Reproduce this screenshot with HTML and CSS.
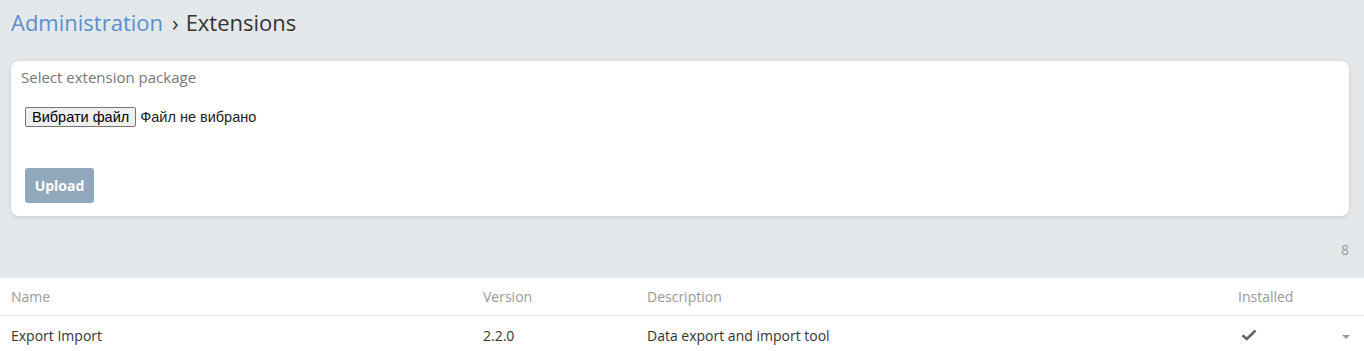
FILE: index.html
```html
<!DOCTYPE html>
<html>
<head>
<meta charset="utf-8">
<link rel="stylesheet" href="styles.css">
</head>
<body>
<div class="page">
  <h1 class="crumbs"><span class="crumb-link">Administration</span><span class="sep">›</span><span class="crumb-cur">Extensions</span></h1>
  <div class="card">
    <div class="card-label">Select extension package</div>
    <div class="file-row">
      <button class="file-btn" type="button">Вибрати файл</button>
      <span class="file-name">Файл не вибрано</span>
    </div>
    <button class="upload" type="button">Upload</button>
  </div>
  <div class="count">8</div>
</div>
<table class="ext-table">
  <thead>
    <tr>
      <th class="c-name">Name</th>
      <th class="c-ver">Version</th>
      <th class="c-desc">Description</th>
      <th class="c-inst">Installed</th>
      <th class="c-act"></th>
    </tr>
  </thead>
  <tbody>
    <tr>
      <td class="c-name">Export Import</td>
      <td class="c-ver">2.2.0</td>
      <td class="c-desc">Data export and import tool</td>
      <td class="c-inst"><svg class="check" width="16" height="12" viewBox="0 0 16 12"><path d="M1.5 6.2 L5.8 10 L14.5 1.5" fill="none" stroke="#666" stroke-width="2.6"/></svg></td>
      <td class="c-act"><span class="caret"></span></td>
    </tr>
  </tbody>
</table>
</body>
</html>
```
FILE: styles.css
```css
html, body {
  margin: 0;
  padding: 0;
}
body {
  background: #e4e8eb;
  font-family: "Open Sans", "Noto Sans", sans-serif;
  color: #333;
  height: 351px;
  overflow: hidden;
}
.page {
  padding: 0 15px 0 11px;
}
.crumbs {
  margin: 0;
  padding-top: 6px;
  height: 61px;
  box-sizing: border-box;
  font-size: 22px;
  font-weight: 400;
  line-height: 32px;
  color: #333;
}
.crumb-link {
  color: #5b8fcc;
}
.sep {
  color: #333;
  margin: 0 7px 0 9px;
}
.card {
  background: #fff;
  border-radius: 8px;
  box-shadow: 0 1px 4px rgba(0,0,0,0.12);
  padding: 5px 10px 14px 10px;
  height: 155px;
  box-sizing: border-box;
}
.card-label {
  font-size: 15px;
  line-height: 22px;
  color: #777;
}
.file-row {
  display: flex;
  align-items: center;
  margin-top: 19px;
  margin-left: 4px;
  height: 20px;
}
.file-btn {
  font-family: "Liberation Sans", Arial, sans-serif;
  font-size: 14.5px;
  height: 20px;
  padding: 0 6px;
  background: #efefef;
  border: 1px solid #767676;
  border-radius: 2px;
  color: #000;
  line-height: 18px;
}
.file-name {
  font-family: "Liberation Sans", Arial, sans-serif;
  font-size: 14.5px;
  color: #222;
  margin-left: 4px;
}
.upload {
  display: block;
  margin-top: 41px;
  margin-left: 4px;
  width: 69px;
  height: 35px;
  border: none;
  border-radius: 3px;
  background: #91a7bb;
  color: #fff;
  font-family: "Open Sans", sans-serif;
  font-weight: 700;
  font-size: 14px;
  padding: 0;
}
.count {
  text-align: right;
  font-size: 14px;
  color: #999;
  line-height: 20px;
  margin-top: 24px;
  height: 38px;
}
.ext-table {
  width: 100%;
  background: #fff;
  border-collapse: collapse;
  font-size: 14px;
}
.ext-table th {
  font-weight: 400;
  color: #999;
  text-align: left;
  height: 37px;
  padding: 0;
  border-bottom: 1px solid #dde0e3;
}
.ext-table td {
  height: 38px;
  padding: 0;
  color: #333;
}
.c-name { padding-left: 11px !important; width: 472px; }
.c-ver { width: 164px; }
.c-desc { width: 591px; }
.c-inst { width: 90px; }
.check {
  display: block;
  margin-left: 3px;
}
.c-act { text-align: right; padding-right: 14px !important; }
.caret {
  display: inline-block;
  width: 0;
  height: 0;
  border-left: 4px solid transparent;
  border-right: 4px solid transparent;
  border-top: 4px solid #999;
  vertical-align: middle;
}
```
